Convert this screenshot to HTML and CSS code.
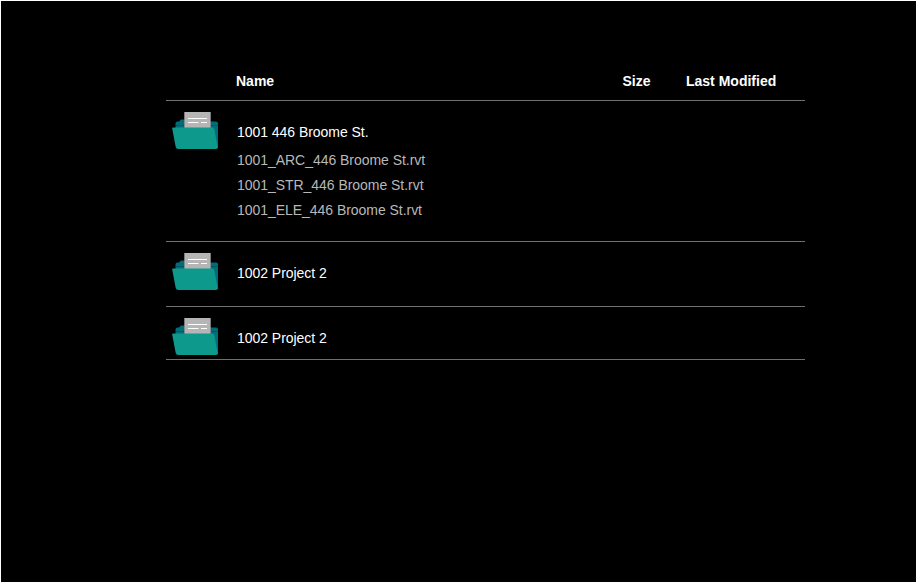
FILE: index.html
```
<!DOCTYPE html>
<html lang="en">
<head>
<meta charset="utf-8">
<title>Projects</title>
<link rel="stylesheet" href="styles.css">
</head>
<body>
<svg width="0" height="0" class="defs">
  <symbol id="folder" viewBox="0 0 48 40">
    <path d="M3.500 16V11.500Q3.500 9.500 5.500 9.500H7L9 7.500H13V9.500H44Q46 9.500 46 11.500V36H42L6 22Z" fill="#006d78"/>
    <path d="M4 13.500H46" stroke="#045461" stroke-width="1"/>
    <rect x="12.500" y="0" width="26" height="18" fill="#b5b5b5"/>
    <path d="M12.500 0V15.500M38.500 0V15.500" stroke="#929292" stroke-width=".6"/>
    <path d="M16 6.500H35M16 10.500H26.500M29 10.500H35" stroke="#fff" stroke-width="1"/>
    <path d="M1 15.500H40.500Q42 15.500 42.300 17L45.700 35Q46 37 44 37H6.500Q4 37 3.700 35L0.200 16.500Q0 15.500 1 15.500Z" fill="#0d998b"/>
  </symbol>
</svg>
<main class="page">
  <div class="table">
    <div class="head">
      <span>Name</span><span class="size">Size</span><span class="modified">Last Modified</span>
    </div>
    <section class="row open">
      <svg class="icon"><use href="#folder"/></svg>
      <div class="content">
        <h2>1001 446 Broome St.</h2>
        <ul>
          <li>1001_ARC_446 Broome St.rvt</li>
          <li>1001_STR_446 Broome St.rvt</li>
          <li>1001_ELE_446 Broome St.rvt</li>
        </ul>
      </div>
    </section>
    <section class="row">
      <svg class="icon"><use href="#folder"/></svg>
      <div class="content"><h2>1002 Project 2</h2></div>
    </section>
    <section class="row last">
      <svg class="icon"><use href="#folder"/></svg>
      <div class="content"><h2>1002 Project 2</h2></div>
    </section>
  </div>
</main>
</body>
</html>
```
FILE: styles.css
```
* { box-sizing: border-box; }
html, body { margin: 0; height: 100%; background: #000; }
body {
  overflow: hidden;
  font-family: "Liberation Sans", Arial, sans-serif;
  font-size: 14px;
  color: #fff;
}
.defs { display: block; }
.page { height: 583px; border: 1px solid #fff; padding: 61px 0 0 165px; }
.table { width: 639px; }
.head {
  display: grid;
  grid-template-columns: 386.500px 63.500px 1fr;
  height: 39px;
  padding: 9px 0 0 70px;
  line-height: 20px;
  font-weight: bold;
  border-bottom: 1px solid #707070;
}
.row {
  display: grid;
  grid-template-columns: 71px 1fr;
  height: 65px;
  border-bottom: 1px solid #707070;
}
.open { height: 141px; }
.last { height: 53px; }
.icon { width: 48px; height: 40px; margin: 11px 0 0 6px; }
.content { padding-top: 21px; letter-spacing: -0.04px; }
h2 { margin: 0; font-size: 14px; font-weight: normal; line-height: 20px; }
ul { list-style: none; margin: 6px 0 0; padding: 0; color: #b8b8b8; }
li { line-height: 25px; }
```
